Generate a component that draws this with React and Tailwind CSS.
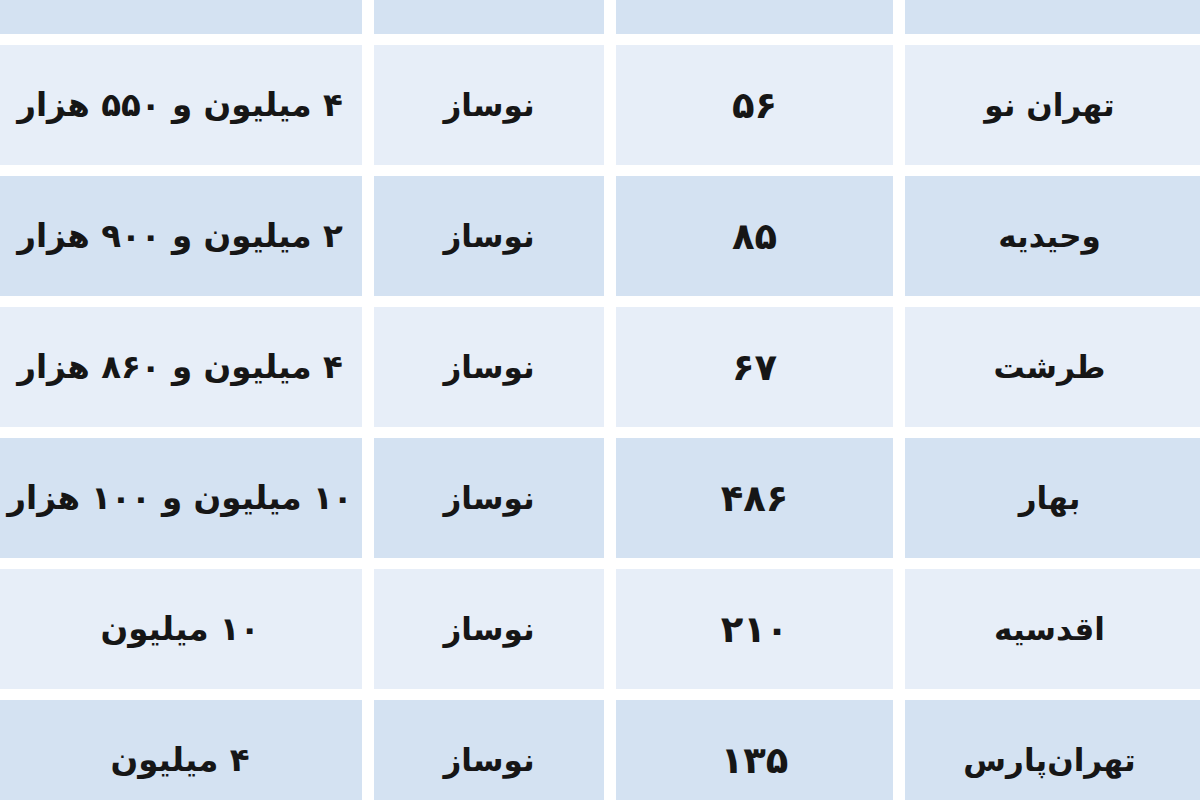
import React from "react";

const rows = [
  { name: "تهران نو", area: "۵۶", age: "نوساز", price: "۴ میلیون و ۵۵۰ هزار", light: true },
  { name: "وحیدیه", area: "۸۵", age: "نوساز", price: "۲ میلیون و ۹۰۰ هزار", light: false },
  { name: "طرشت", area: "۶۷", age: "نوساز", price: "۴ میلیون و ۸۶۰ هزار", light: true },
  { name: "بهار", area: "۴۸۶", age: "نوساز", price: "۱۰ میلیون و ۱۰۰ هزار", light: false },
  { name: "اقدسیه", area: "۲۱۰", age: "نوساز", price: "۱۰ میلیون", light: true },
  { name: "تهران‌پارس", area: "۱۳۵", age: "نوساز", price: "۴ میلیون", light: false },
];

function Cell({ children, light, extra = "" }) {
  return (
    <div
      dir="rtl"
      className={
        "flex items-center justify-center whitespace-nowrap " +
        (light ? "bg-[#e7eef8] " : "bg-[#d4e2f2] ") +
        extra
      }
    >
      {children}
    </div>
  );
}

export default function App() {
  return (
    <div
      className="w-[1200px] h-[800px] overflow-hidden bg-white text-[#161616] font-bold"
      style={{ fontFamily: '"DejaVu Sans", sans-serif' }}
    >
      <div className="flex flex-col gap-[11px] ml-[-2px] w-[1202px]">
        <div className="grid grid-cols-[364px_230px_277px_295px] gap-x-[12px] h-[34px]">
          <div className="bg-[#d4e2f2]" />
          <div className="bg-[#d4e2f2]" />
          <div className="bg-[#d4e2f2]" />
          <div className="bg-[#d4e2f2]" />
        </div>
        {rows.map((r, i) => (
          <div
            key={i}
            className="grid grid-cols-[364px_230px_277px_295px] gap-x-[12px] h-[120px] text-[31px]"
          >
            <Cell light={r.light} extra="overflow-visible text-[32.5px] tracking-[-0.3px]">
              {r.price}
            </Cell>
            <Cell light={r.light}>{r.age}</Cell>
            <Cell light={r.light} extra="text-[37px] pt-[2px]">{r.area}</Cell>
            <Cell light={r.light} extra="pr-[6px]">{r.name}</Cell>
          </div>
        ))}
      </div>
    </div>
  );
}
